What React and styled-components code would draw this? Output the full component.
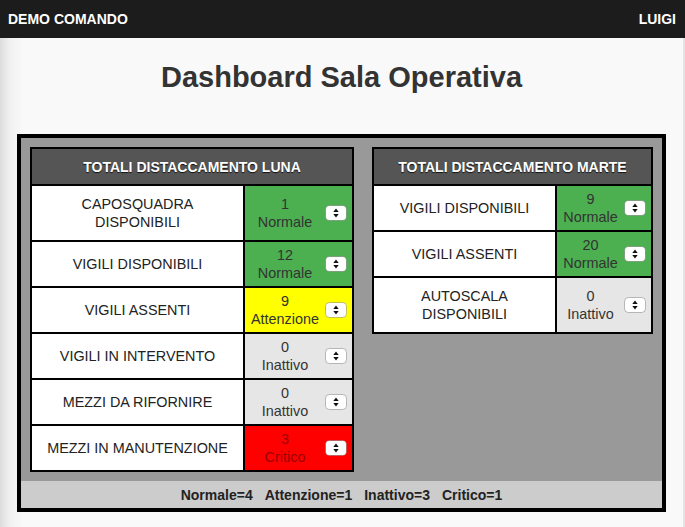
import React from 'react'
import styled, { createGlobalStyle } from 'styled-components'

const GlobalStyle = createGlobalStyle`
  html, body {
    margin: 0;
    padding: 0;
    background: #f9f9f9;
    font-family: "Liberation Sans", Arial, Helvetica, sans-serif;
  }
`;

const TopBar = styled.div`
  height: 38px;
  background: #1c1c1c;
  color: #fff;
  display: flex;
  align-items: center;
  justify-content: space-between;
  padding: 0 9px 0 8px;
  font-size: 14px;
  font-weight: bold;
`;

const Main = styled.div`
  min-height: 489px;
  padding: 23px 17px 0 17px;
  background: linear-gradient(to right, #dcdcdc 0, #f1f1f1 10px, #f9f9f9 24px);
  border-right: 2px solid #e4e4e4;
  box-sizing: border-box;
`;

const Title = styled.h1`
  margin: 0 0 41px;
  text-align: center;
  font-size: 29px;
  line-height: 32px;
  font-weight: bold;
  color: #333;
`;

const Board = styled.div`
  border: 4px solid #000;
  background: #999;
`;

const Tables = styled.div`
  display: flex;
  align-items: flex-start;
  gap: 18px;
  padding: 9px 9px 9px;
`;

const Table = styled.div`
  display: grid;
  grid-template-columns: ${p => p.$label}px ${p => p.$value}px;
  gap: 2px;
  border: 2px solid #000;
  background: #000;
`;

const HeadCell = styled.div`
  grid-column: 1 / -1;
  height: 35px;
  background: #555;
  color: #fff;
  font-size: 14px;
  font-weight: bold;
  display: flex;
  align-items: center;
  justify-content: center;
  text-shadow: 0 1px 1px rgba(0, 0, 0, 0.8);
`;

const LabelCell = styled.div`
  background: #fff;
  color: #222;
  font-size: 14.4px;
  line-height: 18px;
  padding: 9px 12px;
  display: flex;
  align-items: center;
  justify-content: center;
  text-align: center;
`;

const stateColors = {
  Normale: { bg: '#4caf50', fg: '#333' },
  Attenzione: { bg: '#ffff00', fg: '#333' },
  Inattivo: { bg: '#e6e6e6', fg: '#333' },
  Critico: { bg: '#ff0000', fg: '#990000' },
};

const ValueCell = styled.div`
  background: ${p => stateColors[p.$state].bg};
  color: ${p => stateColors[p.$state].fg};
  font-size: 14.4px;
  line-height: 18px;
  padding: 4px 5px 4px 0;
  display: flex;
  align-items: center;
`;

const ValueText = styled.div`
  flex: 1;
  text-align: center;
`;

const Spinner = styled.svg`
  flex: none;
  display: block;
`;

const Footer = styled.div`
  height: 27px;
  background: #ccc;
  display: flex;
  align-items: center;
  justify-content: center;
  gap: 12px;
  font-size: 14px;
  font-weight: bold;
  color: #222;
`;

const SelectArrows = () => (
  <Spinner width="22" height="16" viewBox="0 0 22 16">
    <rect x="0.5" y="0.5" width="21" height="15" rx="4" fill="#fff" stroke="rgba(0,0,0,0.25)" />
    <path d="M8.3 7 L11 3.4 L13.7 7 Z" fill="#111" />
    <path d="M8.3 9 L11 12.6 L13.7 9 Z" fill="#111" />
  </Spinner>
);

const luna = [
  ['CAPOSQUADRA DISPONIBILI', 1, 'Normale'],
  ['VIGILI DISPONIBILI', 12, 'Normale'],
  ['VIGILI ASSENTI', 9, 'Attenzione'],
  ['VIGILI IN INTERVENTO', 0, 'Inattivo'],
  ['MEZZI DA RIFORNIRE', 0, 'Inattivo'],
  ['MEZZI IN MANUTENZIONE', 3, 'Critico'],
];

const marte = [
  ['VIGILI DISPONIBILI', 9, 'Normale'],
  ['VIGILI ASSENTI', 20, 'Normale'],
  ['AUTOSCALA DISPONIBILI', 0, 'Inattivo'],
];

const Totals = ({ title, rows, label, value }) => (
  <Table $label={label} $value={value}>
    <HeadCell>{title}</HeadCell>
    {rows.map(([name, count, state]) => (
      <React.Fragment key={name}>
        <LabelCell>{name}</LabelCell>
        <ValueCell $state={state}>
          <ValueText>{count}<br />{state}</ValueText>
          <SelectArrows />
        </ValueCell>
      </React.Fragment>
    ))}
  </Table>
);

export default function App() {
  const all = [...luna, ...marte];
  const count = s => all.filter(r => r[2] === s).length;
  return (
    <>
      <GlobalStyle />
      <TopBar>
        <span>DEMO COMANDO</span>
        <span>LUIGI</span>
      </TopBar>
      <Main>
        <Title>Dashboard Sala Operativa</Title>
        <Board>
          <Tables>
            <Totals title="TOTALI DISTACCAMENTO LUNA" rows={luna} label={211} value={107} />
            <Totals title="TOTALI DISTACCAMENTO MARTE" rows={marte} label={181} value={94} />
          </Tables>
          <Footer>
            {['Normale', 'Attenzione', 'Inattivo', 'Critico'].map(s => (
              <span key={s}>{s}={count(s)}</span>
            ))}
          </Footer>
        </Board>
      </Main>
    </>
  );
}
